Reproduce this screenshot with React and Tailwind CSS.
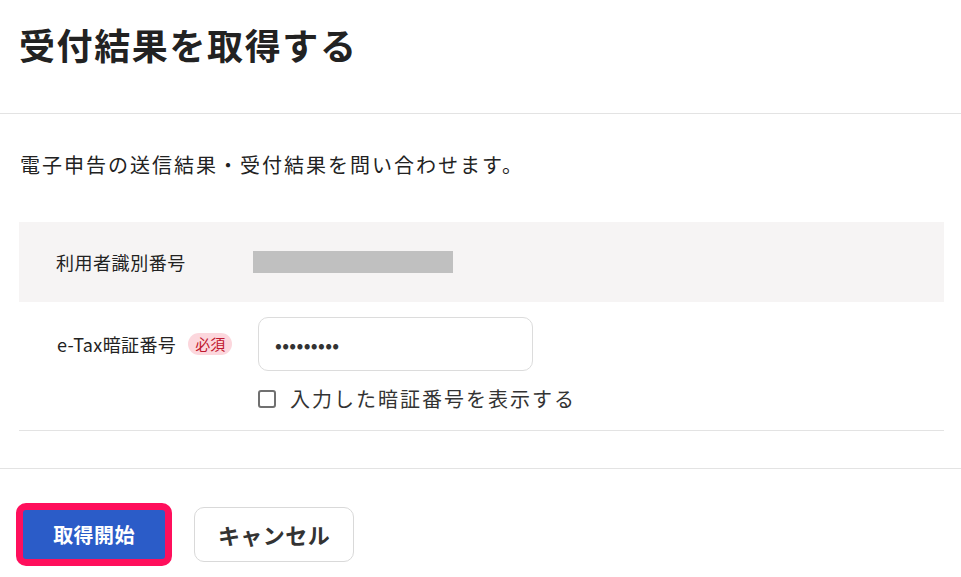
import { useState } from "react";

const FONT = { fontFamily: '"Noto Sans CJK JP", "Noto Sans", sans-serif' };

export default function App() {
  const [showPin, setShowPin] = useState(false);
  const pin = "123456789";

  return (
    <div className="min-h-[577px] w-[961px] bg-white text-[#222]" style={FONT}>
      <header className="h-[114px] border-b border-[#e3e3e3] pl-[19px] pt-[26px]">
        <h1 className="text-[36px] font-bold leading-none tracking-[0.045em]">受付結果を取得する</h1>
      </header>

      <section className="border-b border-[#e3e3e3] pb-[37px] pl-[19px] pr-[17px] pt-[38px]">
        <p className="pl-[1px] text-[20px] leading-[26px] tracking-[0.1em]">
          電子申告の送信結果・受付結果を問い合わせます。
        </p>

        <div className="mt-[44px]">
          <div className="flex h-[80px] items-center bg-[#f6f4f4]">
            <div className="w-[234px] pl-[37px] text-[18px] tracking-[0.03em]">利用者識別番号</div>
            <div className="h-[22px] w-[200px] bg-[#c0c0c0]" />
          </div>

          <div className="flex border-b border-[#e3e3e3] pb-[18px] pt-[15px]">
            <div className="flex h-[54px] w-[239px] items-center pl-[38px]">
              <span className="text-[18px] tracking-[0.02em]">e-Tax暗証番号</span>
              <span className="ml-[12px] rounded-full bg-[#fcd7dd] px-[7px] text-[15px] leading-[22px] text-[#c0182f]">
                必須
              </span>
            </div>
            <div>
              <div className="flex h-[54px] w-[275px] items-center rounded-[10px] border border-[#dcdcdc] bg-white px-[16px]">
                <span className="text-[18px] font-bold tracking-[0.02em] text-[#333]">
                  {showPin ? pin : "•".repeat(pin.length)}
                </span>
              </div>
              <label className="mt-[15px] flex items-center gap-[14px]">
                <span className="relative flex h-[18px] w-[18px] shrink-0">
                  <input
                    type="checkbox"
                    checked={showPin}
                    onChange={(e) => setShowPin(e.target.checked)}
                    className="m-0 h-[18px] w-[18px] appearance-none rounded-[3px] border-2 border-[#707070] bg-white checked:border-[#2b5cc8] checked:bg-[#2b5cc8]"
                  />
                </span>
                <span className="text-[20px] leading-[26px] tracking-[0.1em] text-[#333]">入力した暗証番号を表示する</span>
              </label>
            </div>
          </div>
        </div>
      </section>

      <div className="flex items-center gap-[22px] pl-[16px] pt-[34px]">
        <button className="h-[63px] w-[156px] rounded-[10px] border-[7px] border-[#ff0f5c] bg-[#2b5cc8] text-[20px] font-bold tracking-[0.02em] text-white">
          取得開始
        </button>
        <button className="h-[55px] w-[160px] rounded-[10px] border border-[#d9d9d9] bg-white text-[22px] font-bold tracking-[0.02em] text-[#333]">
          キャンセル
        </button>
      </div>
    </div>
  );
}
